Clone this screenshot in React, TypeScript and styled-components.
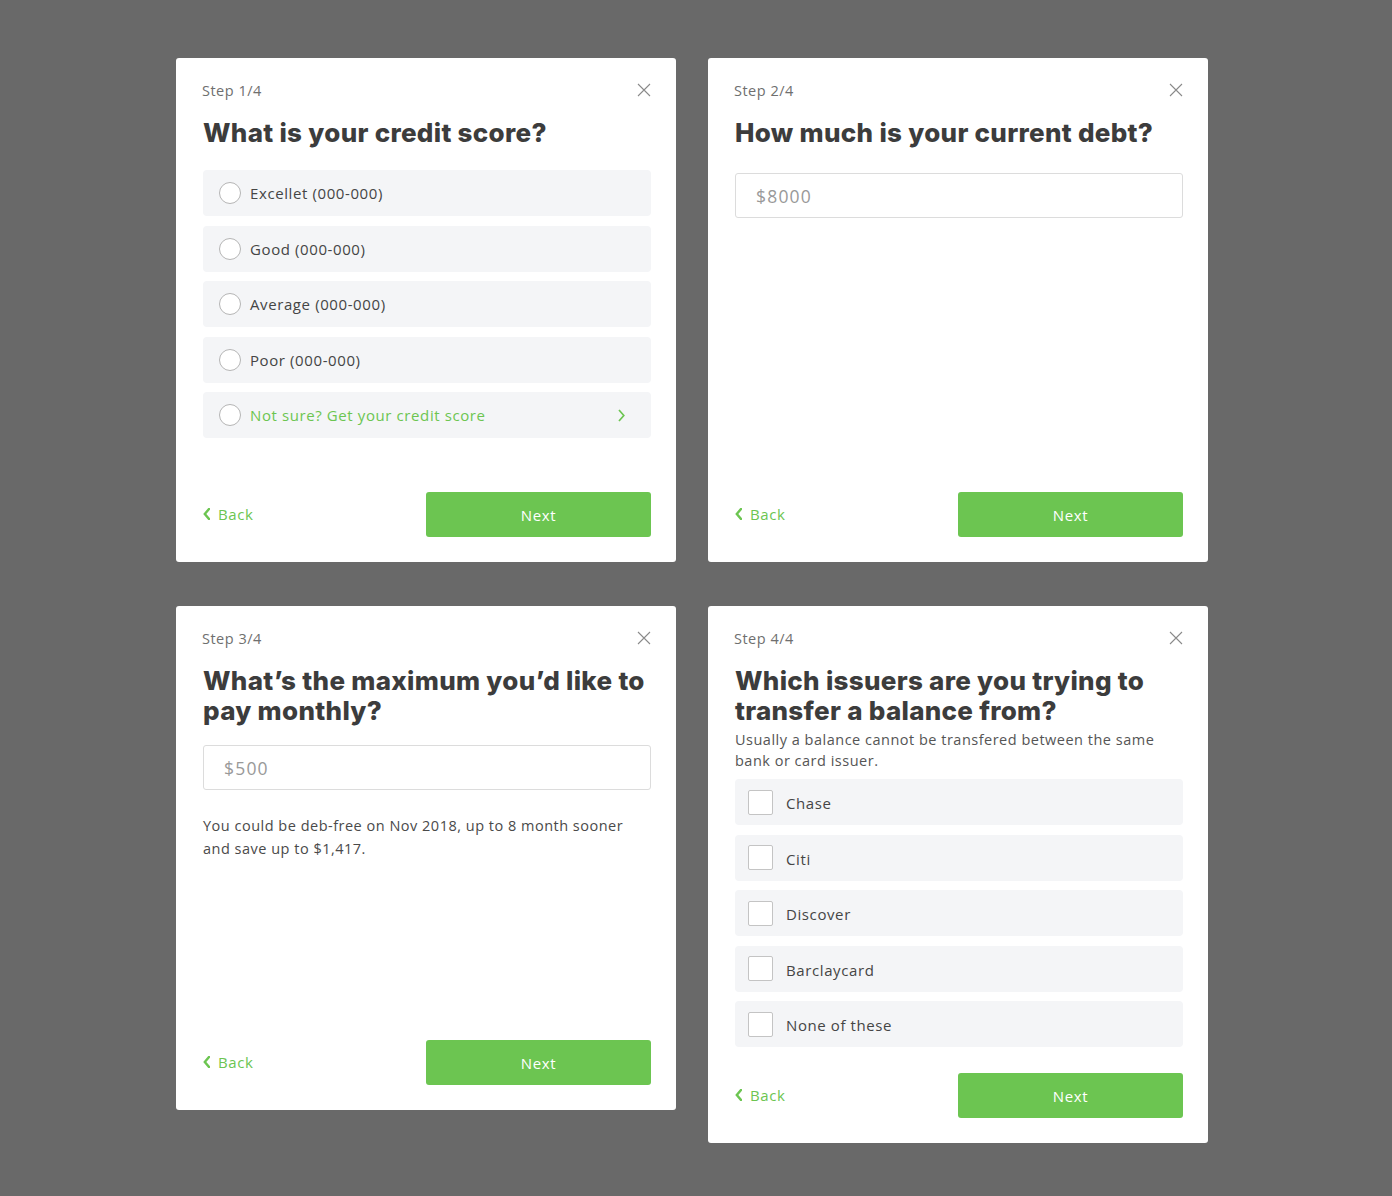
import React from "react";
import styled, { createGlobalStyle } from "styled-components";

const GREEN = "#6cc551";

const Global = createGlobalStyle`
  html, body { margin: 0; padding: 0; background: #696969; }
  body { font-family: "Open Sans", "Liberation Sans", sans-serif; -webkit-font-smoothing: antialiased; }
  * { box-sizing: border-box; }
`;

const Page = styled.div`
  display: grid;
  grid-template-columns: 500px 500px;
  column-gap: 32px;
  row-gap: 44px;
  align-items: start;
  padding: 58px 0 54px 176px;
  min-height: 1196px;
`;

const Card = styled.div`
  background: #fff;
  border-radius: 3px;
  min-height: 504px;
  padding: 23px 25px 25px 27px;
  display: flex;
  flex-direction: column;
`;

const Header = styled.div`
  display: flex;
  justify-content: space-between;
  align-items: center;
  height: 18px;
`;

const StepLabel = styled.div`
  font-size: 14.5px;
  color: #6f6f6f;
  letter-spacing: 0.5px;
  margin-left: -1px;
`;

const CloseBtn = styled.button`
  border: 0;
  background: none;
  padding: 0;
  width: 14px;
  height: 14px;
  display: flex;
  cursor: pointer;
`;

const Title = styled.h2<{ $mb: number }>`
  margin: 19px 0 ${(p) => p.$mb}px 0;
  font-family: Inter, "Liberation Sans", sans-serif;
  font-weight: 800;
  font-size: 26px;
  line-height: 30px;
  color: #3c3c3c;
  letter-spacing: 0.3px;
`;

const Sub = styled.p`
  margin: 0 0 8px 0;
  font-size: 14.5px;
  line-height: 21px;
  color: #555;
  letter-spacing: 0.5px;
`;

const Note = styled.p`
  margin: 24px 0 0 0;
  font-size: 14.5px;
  line-height: 23px;
  color: #4a4a4a;
  letter-spacing: 0.5px;
`;

const OptionList = styled.div`
  display: flex;
  flex-direction: column;
  gap: 9.5px;
`;

const Option = styled.label<{ $accent?: boolean }>`
  display: flex;
  align-items: center;
  height: 46px;
  background: #f4f5f7;
  border-radius: 4px;
  padding: 0 26px 0 16px;
  font-size: 15px;
  letter-spacing: 0.6px;
  color: ${(p) => (p.$accent ? GREEN : "#454545")};
  cursor: pointer;
`;

const CheckOption = styled(Option)`
  padding-left: 13px;
  & > span:last-child { transform: translateY(1px); }
`;

const Radio = styled.span`
  width: 22px;
  height: 22px;
  border-radius: 50%;
  border: 1px solid #b5b5b5;
  background: #fff;
  margin-right: 9px;
  flex: none;
`;

const Checkbox = styled.span`
  width: 25px;
  height: 25px;
  border-radius: 2px;
  border: 1px solid #c4c4c4;
  background: #fff;
  margin-right: 13px;
  flex: none;
`;

const OptionText = styled.span`
  flex: 1;
`;

const Input = styled.input`
  width: 100%;
  height: 45px;
  border: 1px solid #dcdcdc;
  border-radius: 3px;
  padding: 0 20px;
  font-family: "Open Sans", "Liberation Sans", sans-serif;
  font-size: 17.5px;
  letter-spacing: 1.2px;
  color: #999;
  outline: none;
  &::placeholder { color: #999; }
`;

const Footer = styled.div`
  margin-top: auto;
  padding-top: 26px;
  display: flex;
  justify-content: space-between;
  align-items: center;
`;

const BackLink = styled.a`
  display: flex;
  align-items: center;
  gap: 8px;
  color: ${GREEN};
  font-size: 15px;
  letter-spacing: 0.6px;
  text-decoration: none;
  cursor: pointer;
  margin-top: -2px;
`;

const NextBtn = styled.button`
  width: 225px;
  height: 45px;
  background: ${GREEN};
  border: 0;
  border-radius: 3px;
  color: #fff;
  font-family: "Open Sans", "Liberation Sans", sans-serif;
  font-size: 15px;
  letter-spacing: 0.7px;
  cursor: pointer;
`;

const CloseIcon = () => (
  <svg width="14" height="14" viewBox="0 0 14 14">
    <path d="M1 1L13 13M13 1L1 13" stroke="#8a8a8a" strokeWidth="1.1" fill="none" />
  </svg>
);

const ChevLeft = () => (
  <svg width="7" height="12" viewBox="0 0 7 12">
    <path d="M6 1L1.8 6L6 11" stroke={GREEN} strokeWidth="2.4" fill="none" strokeLinecap="square" />
  </svg>
);

const ChevRight = () => (
  <svg width="7" height="13" viewBox="0 0 7 13">
    <path d="M1 1L5.8 6.5L1 12" stroke={GREEN} strokeWidth="1.7" fill="none" />
  </svg>
);

const Shell: React.FC<{ step: string; children: React.ReactNode }> = ({ step, children }) => (
  <Card>
    <Header>
      <StepLabel>{step}</StepLabel>
      <CloseBtn aria-label="Close">
        <CloseIcon />
      </CloseBtn>
    </Header>
    {children}
    <Footer>
      <BackLink>
        <ChevLeft />
        Back
      </BackLink>
      <NextBtn>Next</NextBtn>
    </Footer>
  </Card>
);

const scores = ["Excellet (000-000)", "Good (000-000)", "Average (000-000)", "Poor (000-000)"];
const issuers = ["Chase", "Citi", "Discover", "Barclaycard", "None of these"];

export default function App() {
  return (
    <>
      <Global />
      <Page>
        <Shell step="Step 1/4">
          <Title $mb={22}>What is your credit score?</Title>
          <OptionList>
            {scores.map((s) => (
              <Option key={s}>
                <Radio />
                <OptionText>{s}</OptionText>
              </Option>
            ))}
            <Option $accent>
              <Radio />
              <OptionText>Not sure? Get your credit score</OptionText>
              <ChevRight />
            </Option>
          </OptionList>
        </Shell>
        <Shell step="Step 2/4">
          <Title $mb={25}>How much is your current debt?</Title>
          <Input placeholder="$8000" />
        </Shell>
        <Shell step="Step 3/4">
          <Title $mb={19}>What’s the maximum you’d like to pay monthly?</Title>
          <Input placeholder="$500" />
          <Note>
            You could be deb-free on Nov 2018, up to 8 month sooner and save up to $1,417.
          </Note>
        </Shell>
        <Shell step="Step 4/4">
          <Title $mb={3}>Which issuers are you trying to transfer a balance from?</Title>
          <Sub>Usually a balance cannot be transfered between the same bank or card issuer.</Sub>
          <OptionList>
            {issuers.map((s) => (
              <CheckOption key={s}>
                <Checkbox />
                <OptionText>{s}</OptionText>
              </CheckOption>
            ))}
          </OptionList>
        </Shell>
      </Page>
    </>
  );
}
